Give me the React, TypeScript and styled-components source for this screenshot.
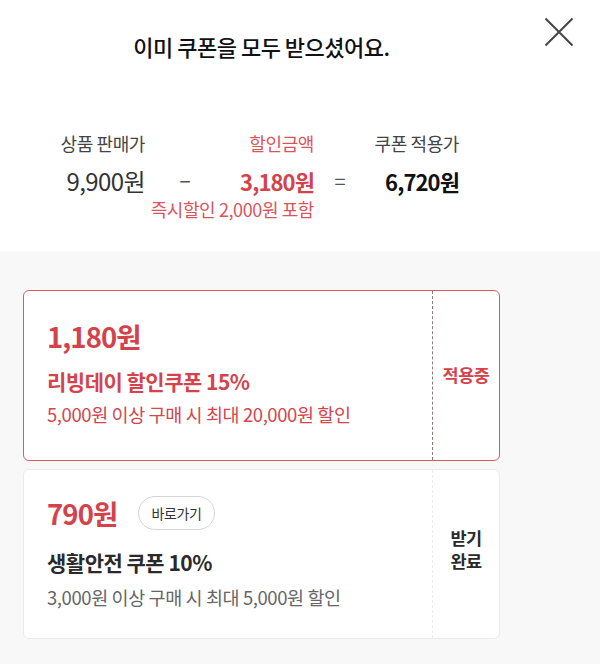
import React from "react";
import styled, { createGlobalStyle } from "styled-components";

const Global = createGlobalStyle`
  html, body { margin: 0; padding: 0; background: #ffffff; }
  body {
    font-family: "Noto Sans CJK KR", "Noto Sans", sans-serif;
    color: #222;
    -webkit-font-smoothing: antialiased;
  }
`;

const RED = "#d4434b";

const Page = styled.div`
  width: 600px;
  min-height: 664px;
  display: flex;
  flex-direction: column;
  background: #f8f8f8;
`;

const Top = styled.div`
  background: #ffffff;
  display: flex;
  flex-direction: column;
`;

const Header = styled.header`
  position: relative;
  height: 92px;
  width: 523px;
  display: flex;
  align-items: center;
  justify-content: center;
`;

const Title = styled.h1`
  margin: 0;
  font-size: 22px;
  font-weight: 500;
  letter-spacing: -0.5px;
  color: #111;
  line-height: 30px;
`;

const Close = styled.button`
  position: absolute;
  left: 543px;
  top: 16px;
  width: 32px;
  height: 32px;
  padding: 0;
  border: 0;
  background: none;
  display: flex;
  align-items: center;
  justify-content: center;
`;

const Summary = styled.div`
  display: grid;
  grid-template-columns: 95px 80px 89px 52px 93px;
  padding: 38px 0 31px 50px;
  row-gap: 0;
`;

const Label = styled.div<{ $red?: boolean }>`
  grid-row: 1;
  justify-self: end;
  font-size: 18px;
  line-height: 26px;
  letter-spacing: -0.4px;
  color: ${(p) => (p.$red ? "#d9555c" : "#444")};
  white-space: nowrap;
  margin-bottom: 9px;
`;

const Value = styled.div<{ $tone: "plain" | "red" | "dark" }>`
  grid-row: 2;
  justify-self: end;
  font-size: ${(p) => (p.$tone === "plain" ? 24 : 22)}px;
  line-height: 32px;
  letter-spacing: ${(p) => (p.$tone === "plain" ? -0.6 : -0.9)}px;
  white-space: nowrap;
  font-weight: ${(p) => (p.$tone === "plain" ? 400 : 700)};
  color: ${(p) => (p.$tone === "red" ? RED : p.$tone === "dark" ? "#111" : "#333")};
`;

const Op = styled.div`
  grid-row: 2;
  justify-self: center;
  font-size: 20px;
  line-height: 32px;
  color: #555;
`;

const Note = styled.div`
  grid-row: 3;
  grid-column: 3;
  justify-self: end;
  white-space: nowrap;
  font-size: 18px;
  line-height: 22px;
  letter-spacing: -0.4px;
  color: #d9555c;
  margin-top: 1px;
`;

const List = styled.div`
  display: flex;
  flex-direction: column;
  gap: 8px;
  padding: 39px 0 24px 23px;
`;

const Card = styled.div<{ $active?: boolean }>`
  width: 477px;
  box-sizing: border-box;
  display: flex;
  background: #ffffff;
  border-radius: 6px;
  border: ${(p) => (p.$active ? `1.5px solid #d95a61` : `1px solid #ebebeb`)};
`;

const Body = styled.div<{ $top: number; $gap1: number; $gap2: number; $bottom: number }>`
  flex: 1;
  display: flex;
  flex-direction: column;
  padding: ${(p) => `${p.$top}px 0 ${p.$bottom}px 23px`};
  & > :nth-child(2) { margin-top: ${(p) => p.$gap1}px; }
  & > :nth-child(3) { margin-top: ${(p) => p.$gap2}px; }
`;

const AmountRow = styled.div`
  display: flex;
  align-items: center;
  gap: 21px;
  height: 36px;
`;

const Amount = styled.div`
  font-size: 27.5px;
  line-height: 36px;
  font-weight: 700;
  letter-spacing: -0.9px;
  color: ${RED};
`;

const Pill = styled.span`
  height: 34px;
  box-sizing: border-box;
  padding: 0 12px;
  border: 1px solid #d4d4d4;
  border-radius: 17px;
  display: inline-flex;
  align-items: center;
  font-size: 14px;
  color: #333;
  letter-spacing: -0.3px;
`;

const Name = styled.div<{ $red?: boolean }>`
  font-size: 21px;
  line-height: 30px;
  font-weight: 700;
  letter-spacing: -0.5px;
  color: ${(p) => (p.$red ? RED : "#2a2a2a")};
`;

const Desc = styled.div<{ $red?: boolean }>`
  font-size: 18.5px;
  line-height: 26px;
  letter-spacing: -0.4px;
  color: ${(p) => (p.$red ? "#d5454d" : "#666")};
`;

const Side = styled.div<{ $active?: boolean }>`
  width: 66px;
  flex: none;
  border-left: ${(p) => (p.$active ? "1.5px dashed #8f7a7a" : "1.5px dashed #ececec")};
  display: flex;
  align-items: center;
  justify-content: center;
  text-align: center;
  font-size: 17.5px;
  line-height: 23px;
  font-weight: 700;
  letter-spacing: -0.5px;
  color: ${(p) => (p.$active ? RED : "#2a2a2a")};
  padding-bottom: ${(p) => (p.$active ? 2 : 10)}px;
`;

export default function App() {
  return (
    <>
      <Global />
      <Page>
        <Top>
          <Header>
            <Title>이미 쿠폰을 모두 받으셨어요.</Title>
            <Close aria-label="닫기">
              <svg width="30" height="30" viewBox="0 0 30 30">
                <path d="M1.5 1.5 L28.5 28.5 M28.5 1.5 L1.5 28.5" stroke="#444" strokeWidth="2" fill="none" />
              </svg>
            </Close>
          </Header>
          <Summary>
            <Label style={{ gridColumn: 1 }}>상품 판매가</Label>
            <Label $red style={{ gridColumn: 3 }}>할인금액</Label>
            <Label style={{ gridColumn: 5 }}>쿠폰 적용가</Label>
            <Value $tone="plain" style={{ gridColumn: 1 }}>9,900원</Value>
            <Op style={{ gridColumn: 2 }}>−</Op>
            <Value $tone="red" style={{ gridColumn: 3 }}>3,180원</Value>
            <Op style={{ gridColumn: 4 }}>=</Op>
            <Value $tone="dark" style={{ gridColumn: 5 }}>6,720원</Value>
            <Note>즉시할인 2,000원 포함</Note>
          </Summary>
        </Top>
        <List>
          <Card $active>
            <Body $top={27} $gap1={12} $gap2={5} $bottom={33}>
              <AmountRow>
                <Amount>1,180원</Amount>
              </AmountRow>
              <Name $red>리빙데이 할인쿠폰 15%</Name>
              <Desc $red>5,000원 이상 구매 시 최대 20,000원 할인</Desc>
            </Body>
            <Side $active>적용중</Side>
          </Card>
          <Card>
            <Body $top={25} $gap1={16} $gap2={7} $bottom={28}>
              <AmountRow>
                <Amount>790원</Amount>
                <Pill>바로가기</Pill>
              </AmountRow>
              <Name>생활안전 쿠폰 10%</Name>
              <Desc>3,000원 이상 구매 시 최대 5,000원 할인</Desc>
            </Body>
            <Side>
              받기
              <br />
              완료
            </Side>
          </Card>
        </List>
      </Page>
    </>
  );
}
